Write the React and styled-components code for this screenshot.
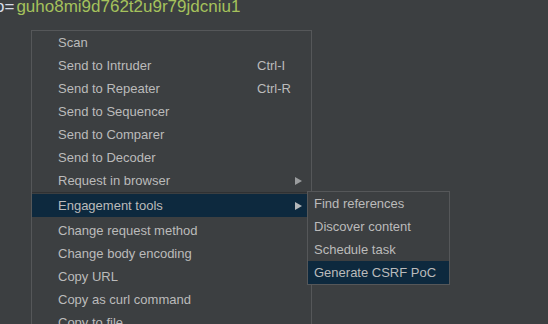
import styled, { createGlobalStyle } from "styled-components";

const Global = createGlobalStyle`
  html, body {
    margin: 0;
    padding: 0;
    background: #3c3f41;
    overflow: hidden;
  }
`;

const Page = styled.div`
  position: relative;
  width: 548px;
  height: 324px;
  overflow: hidden;
  background: #3c3f41;
  font-family: "Liberation Sans", Arial, sans-serif;
`;

const ParamLine = styled.div`
  height: 17px;
  margin-top: -2px;
  font-size: 17px;
  line-height: 17px;
  white-space: nowrap;
  color: #a5c25c;
`;

const ParamName = styled.span`
  color: #d6dbe6;
  margin-left: ${(p) => p.$shift || 0}px;
  margin-right: 2px;
`;

const Menu = styled.div`
  position: absolute;
  left: 31px;
  top: 30px;
  width: 281px;
  box-sizing: border-box;
  border: 1px solid #555759;
  background: #3c3f41;
  font-size: 13px;
  color: #bbbbbb;
`;

const Row = styled.div`
  display: grid;
  grid-template-columns: 199px 1fr 16px;
  align-items: center;
  height: 23px;
  padding-left: 26px;
  margin-bottom: ${(p) => (p.$spaced ? 2 : 0)}px;
  white-space: nowrap;
  background: ${(p) => (p.$active ? "#0d293e" : "transparent")};
  line-height: 23px;
`;

const Shortcut = styled.span`
  color: #bbbbbb;
`;

const Arrow = styled.span`
  width: 0;
  height: 0;
  border-top: 4px solid transparent;
  border-bottom: 4px solid transparent;
  border-left: 7px solid ${(p) => (p.$active ? "#b4b7ba" : "#9a9c9e")};
  justify-self: start;
`;

const Separator = styled.div`
  height: 2px;
  box-sizing: border-box;
  border-top: 1px solid #2f3133;
`;

const SubMenu = styled.div`
  position: absolute;
  left: 275px;
  top: 160px;
  width: 143px;
  box-sizing: border-box;
  border: 1px solid #555759;
  background: #3c3f41;
`;

const SubRow = styled.div`
  height: 23px;
  line-height: 23px;
  padding-left: 6px;
  white-space: nowrap;
  background: ${(p) => (p.$active ? "#0d293e" : "transparent")};
`;

const items = [
  { label: "Scan" },
  { label: "Send to Intruder", key: "Ctrl-I" },
  { label: "Send to Repeater", key: "Ctrl-R" },
  { label: "Send to Sequencer" },
  { label: "Send to Comparer" },
  { label: "Send to Decoder" },
  { label: "Request in browser", sub: true },
  { separator: true },
  { label: "Engagement tools", sub: true, active: true, spaced: true },
  { label: "Change request method" },
  { label: "Change body encoding" },
  { label: "Copy URL" },
  { label: "Copy as curl command" },
  { label: "Copy to file" },
  { label: "Paste from file" },
];

const engagement = [
  "Find references",
  "Discover content",
  "Schedule task",
  "Generate CSRF PoC",
];

export default function App() {
  return (
    <Page>
      <Global />
      <ParamLine>
        <ParamName $shift={-5}>o=</ParamName>guho8mi9d762t2u9r79jdcniu1
      </ParamLine>
      <Menu>
        {items.map((it, i) =>
          it.separator ? (
            <Separator key={i} />
          ) : (
            <Row key={i} $active={it.active} $spaced={it.spaced}>
              <span>{it.label}</span>
              <Shortcut>{it.key || ""}</Shortcut>
              {it.sub ? <Arrow $active={it.active} /> : <span />}
            </Row>
          )
        )}
        <SubMenu>
          {engagement.map((label, i) => (
            <SubRow key={label} $active={i === engagement.length - 1}>
              {label}
            </SubRow>
          ))}
        </SubMenu>
      </Menu>
    </Page>
  );
}
